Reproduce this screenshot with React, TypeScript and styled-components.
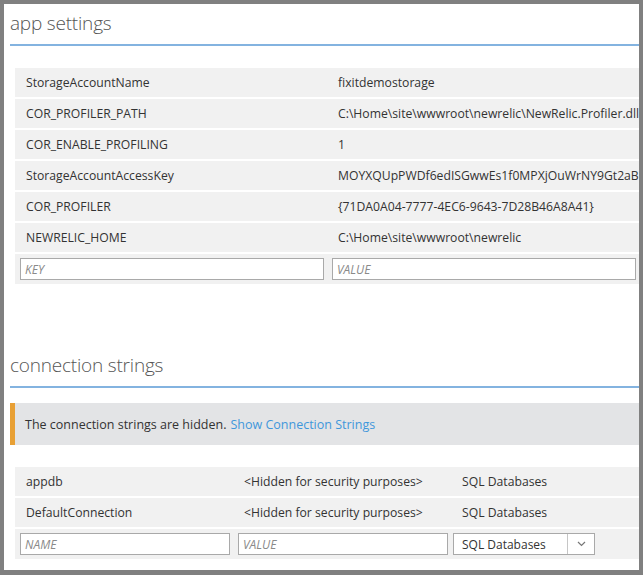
import * as React from "react";
import styled, { createGlobalStyle } from "styled-components";

const font = `"Open Sans", "Noto Sans", sans-serif`;

const Global = createGlobalStyle`
  html, body {
    margin: 0;
    padding: 0;
    background: #808080;
  }
  body {
    font-family: ${font};
    color: #333;
  }
`;

const Frame = styled.div`
  box-sizing: border-box;
  width: 643px;
  height: 575px;
  border-style: solid;
  border-color: #808080;
  border-width: 4px 4px 5px 4px;
  background: #fff;
  overflow: hidden;
`;

const Section = styled.section<{ $gap?: number }>`
  padding-left: 6px;
  margin-top: ${(p) => p.$gap ?? 0}px;
`;

const Title = styled.h2`
  margin: 0;
  height: 42px;
  box-sizing: border-box;
  padding-top: 5px;
  font-size: 19px;
  line-height: 28px;
  font-weight: 300;
  color: #555;
  border-bottom: 2px solid #83b3e0;
  letter-spacing: -0.2px;
`;

const Table = styled.div<{ $top: number }>`
  margin: ${(p) => p.$top}px 0 0 5px;
  display: flex;
  flex-direction: column;
  gap: 2px;
`;

const Row = styled.div<{ $cols: string }>`
  display: grid;
  grid-template-columns: ${(p) => p.$cols};
  height: 29px;
  align-items: center;
  background: #f1f1f1;
  font-size: 12.2px;
  white-space: nowrap;
`;

const Cell = styled.div`
  padding-left: 11px;
  overflow: hidden;
`;

const InputRow = styled(Row)`
  height: 30px;
`;

const Field = styled.div`
  box-sizing: border-box;
  margin: 0 3px 0 5px;
  height: 22px;
  border: 1px solid #a9a9a9;
  background: #fff;
  padding-left: 4px;
  display: flex;
  align-items: center;
  font-size: 12px;
  font-style: italic;
  color: #8a8a8a;
`;

const Select = styled.div`
  box-sizing: border-box;
  margin-left: 2px;
  width: 142px;
  height: 22px;
  border: 1px solid #a9a9a9;
  background: #fff;
  display: flex;
  align-items: stretch;
  font-size: 12px;
  color: #333;
`;

const SelectText = styled.div`
  flex: 1;
  display: flex;
  align-items: center;
  padding-left: 8px;
  border-right: 1px solid #c6c6c6;
`;

const SelectArrow = styled.div`
  width: 26px;
  display: flex;
  align-items: center;
  justify-content: center;
`;

const Notice = styled.div`
  margin-top: 15px;
  height: 42px;
  box-sizing: border-box;
  border-left: 5px solid #e8a035;
  background: #e3e4e6;
  display: flex;
  align-items: center;
  padding-left: 10px;
  font-size: 12.5px;
  color: #333;
`;

const Link = styled.a`
  color: #3f97db;
  margin-left: 4px;
  text-decoration: none;
`;

const appSettings: [string, string][] = [
  ["StorageAccountName", "fixitdemostorage"],
  ["COR_PROFILER_PATH", "C:\\Home\\site\\wwwroot\\newrelic\\NewRelic.Profiler.dll"],
  ["COR_ENABLE_PROFILING", "1"],
  ["StorageAccountAccessKey", "MOYXQUpPWDf6edISGwwEs1f0MPXjOuWrNY9Gt2aBcD=="],
  ["COR_PROFILER", "{71DA0A04-7777-4EC6-9643-7D28B46A8A41}"],
  ["NEWRELIC_HOME", "C:\\Home\\site\\wwwroot\\newrelic"],
];

const connections = ["appdb", "DefaultConnection"];

const appCols = "312px 312px";
const connCols = "218px 218px 1fr";

const App: React.FC = () => (
  <>
    <Global />
    <Frame>
      <Section>
        <Title>app settings</Title>
        <Table $top={22}>
          {appSettings.map(([k, v]) => (
            <Row key={k} $cols={appCols}>
              <Cell>{k}</Cell>
              <Cell>{v}</Cell>
            </Row>
          ))}
          <InputRow $cols={appCols}>
            <Field>KEY</Field>
            <Field>VALUE</Field>
          </InputRow>
        </Table>
      </Section>
      <Section $gap={62}>
        <Title>connection strings</Title>
        <Notice>
          The connection strings are hidden.
          <Link href="#">Show Connection Strings</Link>
        </Notice>
        <Table $top={22}>
          {connections.map((n) => (
            <Row key={n} $cols={connCols}>
              <Cell>{n}</Cell>
              <Cell>&lt;Hidden for security purposes&gt;</Cell>
              <Cell>SQL Databases</Cell>
            </Row>
          ))}
          <InputRow $cols={connCols}>
            <Field>NAME</Field>
            <Field>VALUE</Field>
            <Select>
              <SelectText>SQL Databases</SelectText>
              <SelectArrow>
                <svg width="9" height="6" viewBox="0 0 9 6">
                  <path d="M1 1l3.5 3.5L8 1" fill="none" stroke="#777" strokeWidth="1.2" />
                </svg>
              </SelectArrow>
            </Select>
          </InputRow>
        </Table>
      </Section>
    </Frame>
  </>
);

export default App;
